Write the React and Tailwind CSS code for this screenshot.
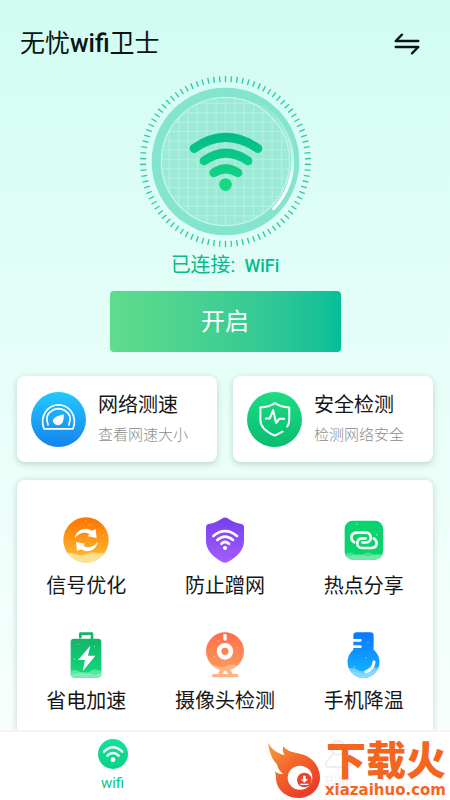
import React from "react";

const TICKS = Array.from({ length: 90 }, (_, i) => i * 4);
const GRID = [-168, -140, -112, -84, -56, -28, 0, 28, 56, 84, 112, 140, 168];

function Gradient({ id, from, to, horizontal }) {
  return (
    <linearGradient id={id} x1="0" y1="0" x2={horizontal ? "1" : "0"} y2={horizontal ? "0" : "1"}>
      <stop offset="0" stopColor={from} />
      <stop offset="1" stopColor={to} />
    </linearGradient>
  );
}

function SwapIcon() {
  return (
    <svg viewBox="0 0 78 66" className="h-[22px] w-[26px]" fill="none" stroke="#0c1412" strokeWidth="7" strokeLinecap="round" strokeLinejoin="round" aria-hidden="true">
      <path d="M73 24H5L24 5" />
      <path d="M5 42H73L54 61" />
    </svg>
  );
}

function Dial() {
  return (
    <svg viewBox="31 34 512 512" className="h-[171px] w-[171px]" fill="none" aria-hidden="true">
      <defs>
        <linearGradient id="dialWifi" gradientUnits="userSpaceOnUse" x1="0" y1="210" x2="0" y2="376">
          <stop offset="0" stopColor="#03bd88" />
          <stop offset="1" stopColor="#15da82" />
        </linearGradient>
        <linearGradient id="dialShine" gradientUnits="userSpaceOnUse" x1="0" y1="100" x2="0" y2="430">
          <stop offset="0" stopColor="#fff" stopOpacity="0" />
          <stop offset="0.55" stopColor="#fff" stopOpacity="0.6" />
          <stop offset="0.8" stopColor="#fff" />
        </linearGradient>
        <clipPath id="dialFace">
          <circle cx="287" cy="290" r="191" />
        </clipPath>
      </defs>
      {TICKS.map((a) => (
        <path key={a} d="M287 34V52" stroke="#2fcaa5" strokeWidth="4" transform={`rotate(${a} 287 290)`} />
      ))}
      <circle cx="287" cy="290" r="221" fill="#84e5ce" />
      <circle cx="287" cy="290" r="192" fill="#9ce9d6" />
      <g clipPath="url(#dialFace)" stroke="#b0f0e0" strokeWidth="4">
        {GRID.map((d) => (
          <path key={d} d={`M${287 + d} 90V490M87 ${284 + d}H487`} />
        ))}
      </g>
      <circle cx="287" cy="290" r="192" stroke="#c4f5e9" strokeWidth="4" />
      <path d="M377 111A201 201 0 0 1 431 431" stroke="url(#dialShine)" strokeWidth="9" strokeLinecap="round" />
      <g stroke="url(#dialWifi)" strokeWidth="27" strokeLinecap="round">
        <path d="M193 251Q287 185 384 251" />
        <path d="M223 288Q288 242 354 288" />
        <path d="M252 324Q288 300 324 324" />
      </g>
      <circle cx="287" cy="359" r="19" fill="#16da82" />
    </svg>
  );
}

function GaugeIcon() {
  return (
    <svg viewBox="64 78 164 164" className="h-[55px] w-[55px] shrink-0" fill="none" aria-hidden="true">
      <defs><Gradient id="gauge" from="#22c8ff" to="#1583ee" /></defs>
      <circle cx="146" cy="160" r="82" fill="url(#gauge)" />
      <g stroke="#fff" strokeWidth="5" strokeLinecap="round" strokeLinejoin="round">
        <path d="M103 188C95 172 98 149 109 135C128 110 164 110 183 135C194 149 197 172 189 188Z" />
        <path d="M115 176C107 157 113 142 126 134C138 126 154 126 166 134C179 142 185 157 177 176" />
      </g>
      <path d="M161 144C163 153 161 169 153 174C144 181 130 175 129 164C129 153 150 147 161 144Z" fill="#fff" />
    </svg>
  );
}

function SafetyIcon() {
  return (
    <svg viewBox="66 78 164 164" className="h-[55px] w-[55px] shrink-0" fill="none" aria-hidden="true">
      <defs><Gradient id="safety" from="#1ddc82" to="#07bd70" /></defs>
      <circle cx="148" cy="160" r="82" fill="url(#safety)" />
      <g stroke="#fff" strokeWidth="6" strokeLinecap="round" strokeLinejoin="round">
        <path d="M172 196L149 208C124 197 106 183 106 162V124C124 123 138 118 149 111C160 118 174 123 192 124V160C192 169 190 175 186 181" />
        <path d="M122 157H134L144 132L153 171L162 158H177" />
      </g>
    </svg>
  );
}

function SignalIcon() {
  return (
    <svg viewBox="161 127 138 138" className="h-[46px] w-[46px]" aria-hidden="true">
      <defs>
        <Gradient id="signal" from="#ff7300" to="#fbc235" />
        <clipPath id="signalClip"><circle cx="230" cy="196" r="68" /></clipPath>
      </defs>
      <circle cx="230" cy="196" r="68" fill="url(#signal)" />
      <g clipPath="url(#signalClip)" fill="#fbe9ab">
        <path d="M161 239Q178 228 195 238T230 238T265 236T299 238V265H161Z" opacity=".55" />
        <path d="M161 245Q180 232 200 238T240 240T299 232V265H161Z" opacity=".6" />
      </g>
      <g fill="#fff">
        <path d="M197 191C199 168 225 154 247 168L259 163L262 190L235 185L240 179C226 170 207 175 197 191Z" />
        <path d="M197 191C199 168 225 154 247 168L259 163L262 190L235 185L240 179C226 170 207 175 197 191Z" transform="rotate(180 231 196)" />
        <g opacity=".55"><circle cx="229" cy="139" r="2" /><circle cx="241" cy="151" r="2" /><circle cx="197" cy="160" r="2" /><circle cx="282" cy="183" r="2" /><circle cx="184" cy="221" r="2" /></g>
      </g>
    </svg>
  );
}

function ShieldWifiIcon() {
  return (
    <svg viewBox="576 127 138 138" className="h-[46px] w-[46px]" fill="none" aria-hidden="true">
      <defs><Gradient id="guard" from="#763fec" to="#a45dff" /></defs>
      <path d="M637 131Q645 126 653 131C664 140 680 146 695 148Q702 150 702 157V199C702 227 680 248 653 262Q645 266 637 262C610 248 588 227 588 199V157Q588 150 595 148C610 146 626 140 637 131Z" fill="url(#guard)" />
      <g stroke="#fff" strokeWidth="8" strokeLinecap="round">
        <path d="M610 184Q645 155 681 184" />
        <path d="M622 196Q645 176 669 196" />
        <path d="M634 207Q645 197 657 207" />
      </g>
      <circle cx="645" cy="220" r="6" fill="#fff" />
    </svg>
  );
}

function HotspotIcon() {
  return (
    <svg viewBox="349 127 138 138" className="h-[46px] w-[46px]" fill="none" aria-hidden="true">
      <defs><clipPath id="hotspotClip"><rect x="360" y="138" width="115" height="117" rx="24" /></clipPath></defs>
      <rect x="360" y="138" width="115" height="117" rx="24" fill="#08d36d" />
      <g clipPath="url(#hotspotClip)" fill="#8aefb8">
        <path d="M360 239Q374 229 388 238T416 238T444 238T475 236V255H360Z" opacity=".5" />
        <path d="M360 240Q374 248 388 242T416 242T444 242T475 242V255H360Z" opacity=".6" />
      </g>
      <g stroke="#fff" strokeWidth="8" strokeLinecap="round">
        <path d="M389 203C376 195 376 174 398 174H424C443 174 443 203 424 203H413" />
        <path d="M389 203C376 195 376 174 398 174H424C443 174 443 203 424 203H413" transform="rotate(180 418 197)" />
      </g>
      <g fill="#fff" opacity=".5"><circle cx="396" cy="149" r="2.500" /><circle cx="456" cy="180" r="2.500" /></g>
    </svg>
  );
}

function BatteryIcon() {
  return (
    <svg viewBox="161 81 138 138" className="h-[46px] w-[46px]" fill="none" aria-hidden="true">
      <defs>
        <Gradient id="battery" from="#14b568" to="#0fdc7c" />
        <clipPath id="batteryClip"><rect x="184" y="101" width="92" height="117" rx="10" /></clipPath>
      </defs>
      <path d="M213 100V86H248V104" stroke="#14b568" strokeWidth="8" strokeLinejoin="round" />
      <rect x="184" y="101" width="92" height="117" rx="10" fill="url(#battery)" />
      <g clipPath="url(#batteryClip)" fill="#a5f4cb">
        <path d="M184 199Q198 190 212 201T240 200T276 198V218H184Z" opacity=".5" />
        <path d="M184 208Q200 206 215 202T245 206T276 202V218H184Z" opacity=".5" />
      </g>
      <path d="M243 122L206 165H227L220 199L258 152H236Z" fill="#fff" />
      <g fill="#fff" opacity=".55"><circle cx="207" cy="118" r="2" /><circle cx="255" cy="124" r="2" /><circle cx="195" cy="162" r="2" /></g>
    </svg>
  );
}

function CameraIcon() {
  return (
    <svg viewBox="576 81 138 138" className="h-[46px] w-[46px]" fill="none" aria-hidden="true">
      <defs>
        <Gradient id="camera" from="#ff6d4d" to="#fd9a5a" />
        <clipPath id="cameraClip"><circle cx="645" cy="139" r="57" /></clipPath>
      </defs>
      <circle cx="645" cy="139" r="57" fill="url(#camera)" />
      <g clipPath="url(#cameraClip)">
        <path d="M588 182Q603 173 618 182T648 183T678 180T702 182V200H588Z" fill="#ffbd90" opacity=".8" />
      </g>
      <path d="M632 190H660L668 207H681Q685 207 685 212T681 217H610Q606 217 606 212T610 207H624Z" fill="#fdb584" />
      <path d="M638 207L643 197H648L654 207Z" fill="#fff" />
      <circle cx="645" cy="139" r="18" stroke="#fff" strokeWidth="14" />
      <rect x="640" y="87" width="10" height="20" rx="4" fill="#fff" />
      <g fill="#fff" opacity=".55"><circle cx="613" cy="156" r="2" /><circle cx="625" cy="107" r="2" /><circle cx="684" cy="128" r="2" /></g>
    </svg>
  );
}

function CoolingIcon() {
  return (
    <svg viewBox="349 81 138 138" className="h-[46px] w-[46px]" fill="none" aria-hidden="true">
      <defs>
        <linearGradient id="cooling" gradientUnits="userSpaceOnUse" x1="0" y1="82" x2="0" y2="218">
          <stop offset="0" stopColor="#0878ff" />
          <stop offset="1" stopColor="#16b7ff" />
        </linearGradient>
        <clipPath id="coolingClip"><circle cx="417" cy="171" r="48" /></clipPath>
      </defs>
      <path d="M386 92Q386 82 396 82H437Q447 82 447 92V134A48 48 0 1 1 386 134Z" fill="url(#cooling)" />
      <g clipPath="url(#coolingClip)" fill="#a9e6ff">
        <path d="M366 194Q382 184 398 194T430 194T468 190V220H366Z" opacity=".6" />
        <path d="M366 205Q382 196 400 203T435 202T468 200V220H366Z" opacity=".4" />
      </g>
      <g stroke="#fff" strokeLinecap="round">
        <path d="M384 106H407M384 125H407" strokeWidth="8" />
        <path d="M448 171Q446 193 424 200" strokeWidth="9" />
      </g>
      <g fill="#fff" opacity=".5"><circle cx="430" cy="112" r="2" /><circle cx="424" cy="158" r="2" /><circle cx="389" cy="186" r="2" /></g>
    </svg>
  );
}

function NavWifiIcon() {
  return (
    <svg viewBox="263 402 90 90" className="h-[30px] w-[30px]" fill="none" aria-hidden="true">
      <defs><Gradient id="navWifi" from="#17e0a0" to="#0bd184" /></defs>
      <circle cx="308" cy="447" r="45" fill="url(#navWifi)" />
      <g stroke="#fff" strokeWidth="7" strokeLinecap="round">
        <path d="M281 440Q308 414 336 440" />
        <path d="M291 452Q308 436 325 452" />
      </g>
      <circle cx="308" cy="464" r="7" fill="#fff" />
    </svg>
  );
}

function ProfileIcon() {
  return (
    <svg viewBox="0 0 30 30" className="h-[30px] w-[30px]" fill="none" stroke="#efefef" strokeWidth="2" aria-hidden="true">
      <circle cx="15" cy="9" r="7" />
      <path d="M10 15L3 24Q2 28 6 28H24Q28 28 27 24L20 15" />
    </svg>
  );
}

function FlameLogo() {
  return (
    <svg viewBox="30 62 162 168" className="h-[56px] w-[54px] shrink-0" fill="none" aria-hidden="true">
      <defs>
        <linearGradient id="flame" x1="0" y1="0" x2="0.7" y2="1">
          <stop offset="0" stopColor="#f9a03a" />
          <stop offset="0.45" stopColor="#f2692c" />
          <stop offset="1" stopColor="#ea3a28" />
        </linearGradient>
      </defs>
      <path d="M34 64C42 83 62 97 83 101C77 93 76 84 79 75C91 92 112 93 134 99C168 108 189 136 189 169C189 203 160 230 123 230C86 230 58 204 57 171C57 163 56 156 53 149C62 157 70 159 79 158C66 148 62 140 60 129C51 121 42 105 39 93C36 83 34 72 34 64Z" fill="url(#flame)" />
      <ellipse cx="129" cy="169" rx="37" ry="36" fill="#fff" />
      <circle cx="142" cy="176" r="22" fill="#ec442a" />
      <path d="M138 163H146V174H153L142 184L131 174H138ZM130 187H154V191H130Z" fill="#fff" />
    </svg>
  );
}

const shortcuts = [
  { title: "网络测速", note: "查看网速大小", Icon: GaugeIcon },
  { title: "安全检测", note: "检测网络安全", Icon: SafetyIcon },
];

const tools = [
  { label: "信号优化", Icon: SignalIcon },
  { label: "防止蹭网", Icon: ShieldWifiIcon },
  { label: "热点分享", Icon: HotspotIcon },
  { label: "省电加速", Icon: BatteryIcon },
  { label: "摄像头检测", Icon: CameraIcon },
  { label: "手机降温", Icon: CoolingIcon },
];

export default function App() {
  return (
    <div className="flex min-h-screen flex-col bg-linear-to-b from-[#d1fcf2] via-[#e8fff9] to-[#fbfefd] font-[Roboto,'Noto_Sans_CJK_SC',sans-serif] text-[#161616]">
      <header className="flex items-center justify-between px-5 pt-7 pr-[30px]">
        <h1 className="text-[25px] leading-8 text-[#0c1412]">
          无忧<span className="font-medium">wifi</span>卫士
        </h1>
        <button type="button" aria-label="切换网络"><SwapIcon /></button>
      </header>

      <main className="flex flex-1 flex-col px-[17px]">
        <section className="flex flex-col items-center pt-4">
          <Dial />
          <p className="mt-1 text-xl leading-7 text-[#0aba8c]">
            已连接: <span className="ml-1 text-lg font-medium">WiFi</span>
          </p>
          <button type="button" className="mt-[11px] h-[61px] w-[231px] rounded bg-linear-to-r from-[#5fdc8c] to-[#02bf98] text-2xl text-white">
            开启
          </button>
        </section>

        <section className="mt-6 grid grid-cols-2 gap-4">
          {shortcuts.map(({ title, note, Icon }) => (
            <button key={title} type="button" className="flex h-[86px] items-center gap-3 rounded-lg bg-white pl-[14px] text-left shadow-[0_2px_6px_rgba(60,110,100,0.3)]">
              <Icon />
              <span className="flex flex-col gap-1">
                <span className="text-xl leading-7">{title}</span>
                <span className="text-[15px] leading-6 font-light text-[#8c8c8c]">{note}</span>
              </span>
            </button>
          ))}
        </section>

        <section className="mt-[18px] grid flex-1 grid-cols-3 content-start gap-y-[34px] rounded-t-lg bg-white pt-[37px] shadow-[0_1px_6px_rgba(60,110,100,0.3)]">
          {tools.map(({ label, Icon }) => (
            <button key={label} type="button" className="flex flex-col items-center gap-[11px]">
              <Icon />
              <span className="text-xl leading-6">{label}</span>
            </button>
          ))}
        </section>
      </main>

      <nav className="relative grid h-[70px] grid-cols-2 border-t-2 border-[#f4f4f5] bg-white">
        <button type="button" className="flex flex-col items-center pt-[7px] text-[15px] leading-5 text-[#08c487]">
          <NavWifiIcon />
          <span className="mt-1">wifi</span>
        </button>
        <button type="button" className="flex flex-col items-center pt-[7px] text-[15px] leading-5 text-[#f2f2f2]">
          <ProfileIcon />
          <span className="mt-1">我的</span>
        </button>
        <div className="absolute right-1 bottom-0.5 flex items-center gap-1 text-[#f4651f]">
          <FlameLogo />
          <div className="flex flex-col items-end">
            <span className="text-[40px] leading-10 font-black">下载火</span>
            <span className="font-['DejaVu_Sans'] text-[15px] leading-4 font-bold">xiazaihuo.com</span>
          </div>
        </div>
      </nav>
    </div>
  );
}
